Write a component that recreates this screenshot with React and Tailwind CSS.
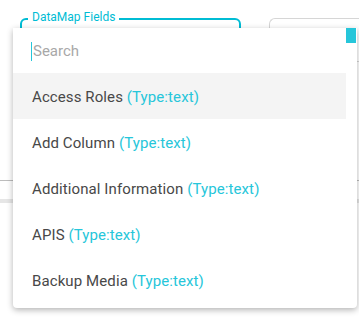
import React from 'react';

const fields = [
  { name: 'Access Roles', type: 'text' },
  { name: 'Add Column', type: 'text' },
  { name: 'Additional Information', type: 'text' },
  { name: 'APIS', type: 'text' },
  { name: 'Backup Media', type: 'text' },
];

const App = () => {
  return (
    <div
      className="relative w-[359px] h-[319px] overflow-hidden bg-white"
      style={{ fontFamily: 'Roboto, "Liberation Sans", sans-serif' }}
    >
      {/* Form behind the dropdown */}
      <div className="flex flex-col pt-[18px]">
        <div className="flex pl-[20px] gap-[28px]">
          <div className="relative w-[221px] h-[44px] border-2 border-[#00bcd4] rounded-[6px]">
            <span className="absolute -top-[11px] left-[6px] bg-white px-[4px] text-[12px] leading-[16px] text-[#00bcd4]">
              DataMap Fields
            </span>
          </div>
          <div className="flex-1 h-[44px] border border-[#d6d6d6] rounded-l-[6px] border-r-0"></div>
        </div>
        <div className="mt-[118px] h-px bg-[#bdbdbd]"></div>
        <div className="mt-[18px] h-[4px] bg-[#e6e6e6]"></div>
      </div>

      {/* Dropdown overlay */}
      <div className="absolute left-[13px] top-[28px] w-[344px] h-[280px] bg-white rounded-b-[4px] shadow-[0_2px_6px_rgba(0,0,0,0.3)] flex">
        <div className="flex-1 flex flex-col pb-[5px]">
          <div className="h-[45px] flex items-center pl-[18px] pt-[2px]">
            <span className="w-px h-[19px] bg-[#26c6da] mr-px"></span>
            <span className="text-[15px] text-[#a8a8a8]">Search</span>
          </div>
          {fields.map((f, i) => (
            <div
              key={f.name}
              className={`h-[46px] flex items-center pl-[19px] pt-[2px] text-[15px] tracking-[0.1px] whitespace-pre ${i === 0 ? 'bg-[#f4f4f4]' : ''}`}
            >
              <span className="text-[#484848]">{f.name} </span>
              <span className="text-[#26c6da]">(Type:{f.type})</span>
            </div>
          ))}
        </div>
        <div className="w-[11px] flex flex-col items-end">
          <div className="w-[10px] h-[15px] bg-[#26c6da] mr-[1px]"></div>
        </div>
      </div>
    </div>
  );
};

export default App;
